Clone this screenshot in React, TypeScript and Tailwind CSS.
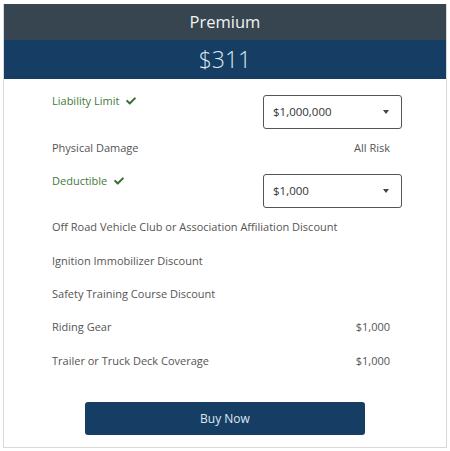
import { FaCheck } from "react-icons/fa"

const font = { fontFamily: '"Open Sans", "Liberation Sans", sans-serif' }

function Select({ value }: { value: string }) {
  return (
    <div className="flex h-[34px] w-[139px] items-center justify-between rounded-[3px] border border-[#555] px-[9px] text-[11.5px] text-[#333]">
      <span>{value}</span>
      <span className="mr-[3px] h-0 w-0 border-x-[3px] border-t-[4px] border-x-transparent border-t-[#444]" />
    </div>
  )
}

function Label({ text, check }: { text: string; check?: boolean }) {
  return (
    <div className={`flex items-center gap-[7px] leading-[16px] ${check ? "text-[#3f7a3a]" : "text-[#555]"}`}>
      <span>{text}</span>
      {check && <FaCheck className="h-[10px] w-[10px] text-[#3a6b35]" />}
    </div>
  )
}

function Row({ label, value, className }: { label: string; value?: string; className: string }) {
  return (
    <div className={`flex items-center justify-between leading-[16px] ${className}`}>
      <Label text={label} />
      {value && <span className="mr-[12px] text-[#555]">{value}</span>}
    </div>
  )
}

export default function App() {
  return (
    <div className="h-[451px] w-[450px] bg-white pl-[3px] pt-[4px]" style={font}>
      <div className="w-[444px] border-x border-b border-[#d9d9d9]">
        <div className="flex h-[36px] items-center justify-center bg-[#36454f] text-[16.5px] text-[#f2f2f2]">
          Premium
        </div>
        <div className="flex h-[39px] items-center justify-center bg-[#163d63] text-[23px] font-light text-[#dce8f3]">
          $311
        </div>

        <div className="flex flex-col pl-[48px] pr-[44px] pb-[12px] text-[11px]">
          <div className="flex items-start justify-between pt-[14px]">
            <Label text="Liability Limit" check />
            <div className="mt-[2px]">
              <Select value="$1,000,000" />
            </div>
          </div>

          <Row className="mt-[11px]" label="Physical Damage" value="All Risk" />

          <div className="mt-[17px] flex items-start justify-between">
            <Label text="Deductible" check />
            <div className="mt-[1px]">
              <Select value="$1,000" />
            </div>
          </div>

          <Row className="mt-[11px]" label="Off Road Vehicle Club or Association Affiliation Discount" />
          <Row className="mt-[18px]" label="Ignition Immobilizer Discount" />
          <Row className="mt-[17px]" label="Safety Training Course Discount" />
          <Row className="mt-[17px]" label="Riding Gear" value="$1,000" />
          <Row className="mt-[18px]" label="Trailer or Truck Deck Coverage" value="$1,000" />

          <div className="mt-[33px] flex justify-center pr-[4px]">
            <button className="h-[33px] w-[280px] rounded-[3px] bg-[#163d63] text-[12px] text-[#dce8f3]">
              Buy Now
            </button>
          </div>
        </div>
      </div>
    </div>
  )
}
